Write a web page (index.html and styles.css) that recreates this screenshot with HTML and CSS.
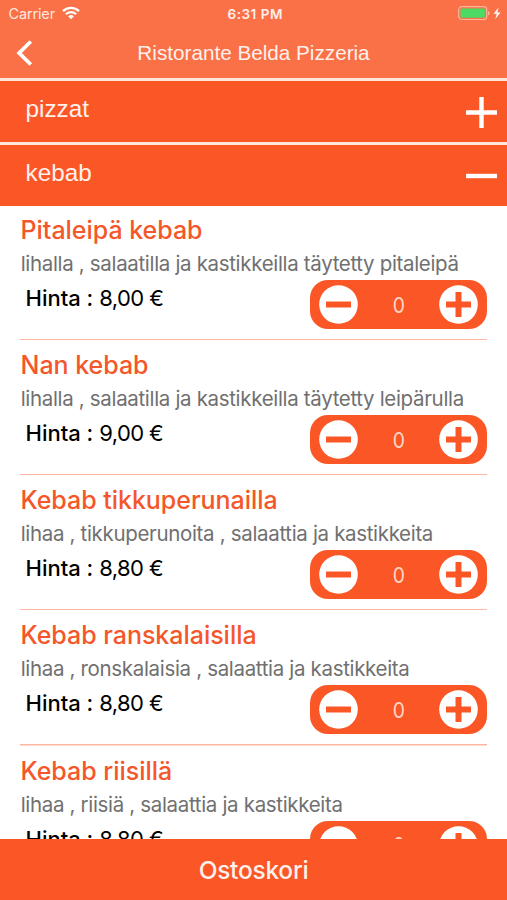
FILE: index.html
```
<!DOCTYPE html>
<html lang="fi">
<head>
<meta charset="utf-8">
<title>Ristorante Belda Pizzeria</title>
<link rel="stylesheet" href="styles.css">
</head>
<body>
<svg class="defs" width="0" height="0" aria-hidden="true">
  <symbol id="minus" viewBox="0 0 39 39"><circle cx="19.5" cy="19.5" r="19.3" fill="#fff"/><path d="M7 19.5h25" stroke="#fb5626" stroke-width="6"/></symbol>
  <symbol id="plus" viewBox="0 0 39 39"><circle cx="19.5" cy="19.5" r="19.3" fill="#fff"/><path d="M7 19.5h25M19.5 7v25" stroke="#fb5626" stroke-width="6"/></symbol>
</svg>
<div class="app">
  <header class="top">
    <div class="status">
      <div class="carrier"><span>Carrier</span>
        <svg width="18" height="14" viewBox="0 0 18 14" fill="none" stroke="#fff" stroke-width="2.3"><path d="M1 5.1a11.4 11.4 0 0 1 16 0M3.900 8.200a7.3 7.3 0 0 1 10.2 0"/><path d="M9 13.200 6.100 10.300a4.200 4.200 0 0 1 5.800 0z" fill="#fff" stroke="none"/></svg>
      </div>
      <div class="time">6:31 PM</div>
      <div class="power">
        <svg width="44" height="16" viewBox="0 0 44 16"><rect x=".7" y="1.7" width="28" height="12.8" rx="3" fill="none" stroke="#fdb59b" stroke-width="1.2"/><rect x="2.5" y="3.5" width="24.4" height="9.2" rx="1.4" fill="#4cd964"/><path d="M30 6v4.5q1.6-.6 1.6-2.2T30 6" fill="#fdb59b"/><path d="m40.6 2.5-5 6.2h3.2l-1.5 5.2 5.2-6.5h-3.300z" fill="#fff"/></svg>
      </div>
    </div>
    <div class="nav">
      <svg class="back" width="18" height="28" viewBox="0 0 18 28" fill="none" stroke="#fff" stroke-width="3.800"><path d="M14.800 2.500 3.200 14l11.600 11.500"/></svg>
      <h1>Ristorante Belda Pizzeria</h1>
    </div>
  </header>
  <div class="section"><span>pizzat</span><svg width="31" height="31" viewBox="0 0 31 31" stroke="#fff" stroke-width="4.400"><path d="M0 15.500h31M15.500 0v31"/></svg></div>
  <div class="section"><span>kebab</span><svg width="31" height="31" viewBox="0 0 31 31" stroke="#fff" stroke-width="4.400"><path d="M0 15h31"/></svg></div>
  <main class="list">
    <article class="item"><h2>Pitaleipä kebab</h2><p>lihalla , salaatilla ja kastikkeilla täytetty pitaleipä</p><div class="price"><b>Hinta :</b><span>8,00 €</span></div><div class="stepper"><svg><use href="#minus"/></svg><span>0</span><svg><use href="#plus"/></svg></div></article>
    <article class="item"><h2>Nan kebab</h2><p>lihalla , salaatilla ja kastikkeilla täytetty leipärulla</p><div class="price"><b>Hinta :</b><span>9,00 €</span></div><div class="stepper"><svg><use href="#minus"/></svg><span>0</span><svg><use href="#plus"/></svg></div></article>
    <article class="item"><h2>Kebab tikkuperunailla</h2><p>lihaa , tikkuperunoita , salaattia ja kastikkeita</p><div class="price"><b>Hinta :</b><span>8,80 €</span></div><div class="stepper"><svg><use href="#minus"/></svg><span>0</span><svg><use href="#plus"/></svg></div></article>
    <article class="item"><h2>Kebab ranskalaisilla</h2><p>lihaa , ronskalaisia , salaattia ja kastikkeita</p><div class="price"><b>Hinta :</b><span>8,80 €</span></div><div class="stepper"><svg><use href="#minus"/></svg><span>0</span><svg><use href="#plus"/></svg></div></article>
    <article class="item"><h2>Kebab riisillä</h2><p>lihaa , riisiä , salaattia ja kastikkeita</p><div class="price"><b>Hinta :</b><span>8,80 €</span></div><div class="stepper"><svg><use href="#minus"/></svg><span>0</span><svg><use href="#plus"/></svg></div></article>
  </main>
  <footer class="cart">Ostoskori</footer>
</div>
</body>
</html>
```
FILE: styles.css
```
* { box-sizing: border-box; }
body { margin: 0; background: #fff; font-family: Inter, "Liberation Sans", sans-serif; }
h1, h2, p { margin: 0; font-weight: 400; white-space: nowrap; }
svg { display: block; flex: none; }
.defs { position: absolute; }
.app { height: 900px; display: flex; flex-direction: column; overflow: hidden; }
.top { flex: none; height: 78px; background: #fa7047; color: #fff; }
.status { height: 27px; display: grid; grid-template-columns: 1fr auto 1fr; align-items: center; padding: 0 5px 0 8.5px; }
.carrier { display: flex; align-items: center; gap: 7px; font-size: 14.5px; letter-spacing: -.15px; color: #ffe7df; }
.carrier svg { margin-top: -1px; }
.time { font-size: 13.5px; font-weight: 600; letter-spacing: .5px; color: #fff1ec; }
.power { justify-self: end; }
.power svg { margin-top: -1px; }
.nav { height: 51px; display: grid; grid-template-columns: 40px 1fr 40px; align-items: center; }
.back { margin-left: 15.5px; }
.nav h1 { text-align: center; font: 20.700px/24px "Liberation Sans", sans-serif; color: #fff1ec; }
.section { flex: none; height: 64px; border-top: 3px solid #ffe4da; background: #fb5626; display: flex; justify-content: space-between; align-items: center; padding: 0 10px 0 25.5px; color: #fff1ec; font: 24.300px/28px "Liberation Sans", sans-serif; }
.section span { margin-bottom: 5px; }
.section svg { margin-top: 1px; }
.list { flex: 1; min-height: 0; overflow: hidden; padding: 0 20px; margin-top: -1px; }
.item { height: 135.150px; background: linear-gradient(#fcb6a2, #fcb6a2) 0 100% / 100% 1.500px no-repeat; display: grid; grid-template: 44px 24px 1fr / 1fr 177px; }
.item h2 { grid-column: 1 / 3; font-size: 25px; line-height: 30px; font-weight: 500; letter-spacing: -.03px; color: #f4572a; padding: 10px 0 0 .5px; }
.item p { grid-column: 1 / 3; font-size: 20.500px; line-height: 30px; letter-spacing: -.330px; color: #707070; padding-left: .7px; }
.price { display: flex; gap: 6px; padding: 11px 0 0 5.500px; font-size: 22px; line-height: 28px; color: #000; white-space: nowrap; }
.price b { font-weight: 500; }
.price span { letter-spacing: -.600px; }
.stepper { height: 49px; margin-top: 7px; border-radius: 18px; background: #fb5626; display: flex; align-items: center; justify-content: space-between; padding: 0 8.500px; color: #ffd5c7; font-size: 22px; }
.stepper span { transform: scaleX(.88); }
.stepper svg { width: 39px; height: 39px; }
.cart { flex: none; height: 61px; background: #fb5626; color: #fff1ec; text-align: center; font-size: 24.500px; font-weight: 500; letter-spacing: -.250px; line-height: 62px; }
```
